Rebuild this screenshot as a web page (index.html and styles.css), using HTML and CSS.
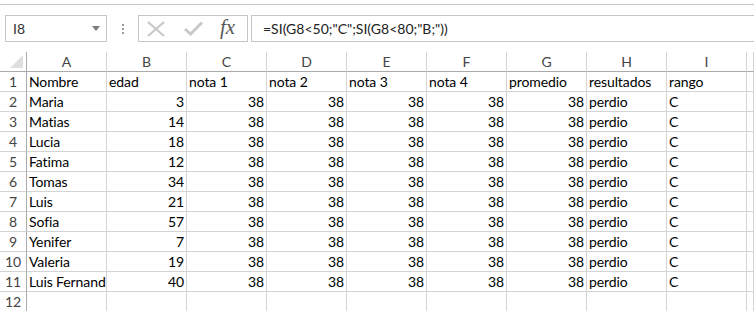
FILE: index.html
```
<!DOCTYPE html>
<html lang="es">
<head>
  <meta charset="UTF-8" />
  <title>Libro1 - Excel</title>
  <link rel="stylesheet" href="styles.css">
</head>
<body>

  <div class="topline"></div>

  <div class="formula-row">
    <div class="name-box">
      <span>I8</span>
      <svg class="arrow" width="8" height="5" viewBox="0 0 8 5"><path d="M0 0 H8 L4 5 Z" fill="#7a7a7a"/></svg>
    </div>
    <div class="dots"><i></i><i></i><i></i></div>
    <div class="buttons">
      <svg width="18" height="16" viewBox="0 0 18 16"><path d="M1 1 L17 15 M17 1 L1 15" stroke="#c8c8c8" stroke-width="2.2" fill="none"/></svg>
      <svg width="19" height="15" viewBox="0 0 19 15"><path d="M1 8 L6.5 13 L18 1.5" stroke="#c8c8c8" stroke-width="3" fill="none"/></svg>
      <span class="fx">fx</span>
    </div>
    <div class="formula">=SI(G8&lt;50;"C";SI(G8&lt;80;"B;"))</div>
  </div>

  <div class="sheet" id="sheet">
    <!-- Filled by JavaScript -->
  </div>

  <script>
    const cols = ["A", "B", "C", "D", "E", "F", "G", "H", "I", ""];
    const head = ["Nombre", "edad", "nota 1", "nota 2", "nota 3", "nota 4", "promedio", "resultados", "rango"];
    const people = [
      ["Maria", 3], ["Matias", 14], ["Lucia", 18], ["Fatima", 12], ["Tomas", 34],
      ["Luis", 21], ["Sofia", 57], ["Yenifer", 7], ["Valeria", 19], ["Luis Fernand", 40]
    ];

    const sheet = document.getElementById("sheet");
    let html = '<div class="corner"><span></span></div>';
    cols.forEach(c => { html += `<div class="col-head">${c}</div>`; });

    const addRow = (n, cells) => {
      html += `<div class="row-head">${n}</div>`;
      cells.forEach(c => {
        const num = typeof c === "number";
        html += `<div class="cell${num ? " num" : ""}">${c}</div>`;
      });
    };

    addRow(1, [...head, ""]);
    people.forEach((p, i) => {
      addRow(i + 2, [p[0], p[1], 38, 38, 38, 38, 38, "perdio", "C", ""]);
    });
    addRow(12, ["", "", "", "", "", "", "", "", "", ""]);

    sheet.innerHTML = html;
  </script>

</body>
</html>
```

FILE: styles.css
```
* { box-sizing: border-box; }
body {
  margin: 0;
  background: #fff;
  font-family: Lato, 'Open Sans', sans-serif;
  font-size: 14px;
  font-variant-ligatures: none;
  color: #000;
  overflow: hidden;
}
.topline {
  height: 5px;
  border-bottom: 1px solid #c6c6c6;
}
.formula-row {
  display: flex;
  align-items: center;
  height: 27px;
  margin-top: 10px;
  padding-left: 5px;
}
.name-box {
  width: 102px;
  height: 27px;
  border: 1px solid #c6c6c6;
  display: flex;
  align-items: center;
  justify-content: space-between;
  padding: 0 6px 0 7px;
  color: #333;
}
.dots {
  width: 31px;
  display: flex;
  flex-direction: column;
  align-items: center;
  gap: 2px;
}
.dots i {
  width: 2px;
  height: 2px;
  background: #9a9a9a;
}
.buttons {
  width: 110px;
  height: 27px;
  border: 1px solid #c6c6c6;
  display: flex;
  align-items: center;
  gap: 19px;
  padding-left: 8px;
}
.fx {
  font-family: 'Liberation Serif', serif;
  font-style: italic;
  font-size: 21px;
  color: #595959;
  margin-left: -2px;
  margin-top: -3px;
}
.formula {
  flex: 1;
  height: 27px;
  margin-left: 3px;
  border: 1px solid #c6c6c6;
  border-right: none;
  padding-left: 11px;
  line-height: 25px;
  color: #222;
}
.sheet {
  display: grid;
  grid-template-columns: 27px repeat(9, 80px) 1fr;
  grid-auto-rows: 20px;
  grid-template-rows: 20px;
  margin-top: 10px;
}
.corner, .col-head, .row-head, .cell {
  border-right: 1px solid #d4d4d4;
  border-bottom: 1px solid #d4d4d4;
  white-space: nowrap;
  overflow: hidden;
}
.corner {
  position: relative;
  border-right-color: #ababab;
  border-bottom-color: #ababab;
}
.corner span {
  position: absolute;
  right: 3px;
  bottom: 3px;
  width: 0;
  height: 0;
  border-left: 13px solid transparent;
  border-bottom: 13px solid #dfdfdf;
}
.col-head {
  border-bottom-color: #ababab;
  text-align: center;
  color: #444;
  line-height: 20px;
}
.row-head {
  border-right-color: #ababab;
  text-align: center;
  color: #444;
  line-height: 20px;
}
.cell {
  padding: 0 2px;
  line-height: 20px;
  letter-spacing: -0.1px;
}
.cell.num {
  text-align: right;
}
```
